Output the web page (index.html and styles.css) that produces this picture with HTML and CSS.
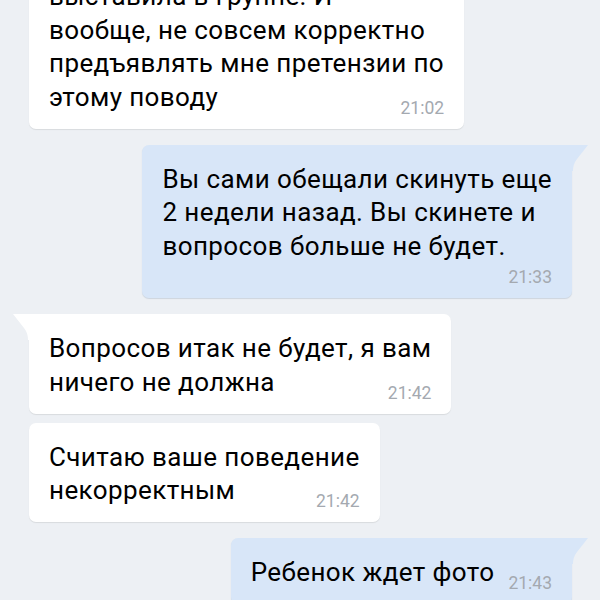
FILE: index.html
```html
<!DOCTYPE html>
<html lang="ru">
<head>
  <meta charset="UTF-8" />
  <meta name="viewport" content="width=device-width, initial-scale=1.0" />
  <title>Диалог</title>
  <link rel="stylesheet" href="styles.css">
</head>
<body>
  <main class="chat">
    <div class="msg in">
      <p>выставила в группе. И<br>вообще, не совсем корректно<br>предъявлять мне претензии по<br>этому поводу<span class="time">21:02</span></p>
    </div>

    <div class="msg out first">
      <svg class="tail" width="17" height="26" viewBox="0 0 17 26"><path d="M0 0 H16 L5 14 Q1 19 1 26 H0 Z" /></svg>
      <p>Вы сами обещали скинуть еще<br>2 недели назад. Вы скинете и<br>вопросов больше не будет.</p>
      <span class="time own-line">21:33</span>
    </div>

    <div class="msg in first">
      <svg class="tail" width="17" height="26" viewBox="0 0 17 26"><path d="M17 0 H1 L12 14 Q16 19 16 26 H17 Z" /></svg>
      <p>Вопросов итак не будет, я вам<br>ничего не должна<span class="time">21:42</span></p>
    </div>

    <div class="msg in next">
      <p>Считаю ваше поведение<br>некорректным<span class="time">21:42</span></p>
    </div>

    <div class="msg out first">
      <svg class="tail" width="17" height="26" viewBox="0 0 17 26"><path d="M0 0 H16 L5 14 Q1 19 1 26 H0 Z" /></svg>
      <p>Ребенок ждет фото<span class="time">21:43</span></p>
    </div>
  </main>
</body>
</html>
```

FILE: styles.css
```css
body {
  margin: 0;
  background: #edf0f4;
  font-family: Roboto, 'Noto Sans', sans-serif;
  color: #000;
  overflow: hidden;
}
.chat {
  display: flex;
  flex-direction: column;
  margin-top: -38px;
  padding: 0 28px 0 29px;
}
.msg {
  position: relative;
  display: flow-root;
  padding: 18px 20px 11px;
  border-radius: 7px;
  font-size: 26px;
  line-height: 33.5px;
  letter-spacing: 0.4px;
}
.msg p {
  margin: 0;
}
.msg.in {
  align-self: flex-start;
  background: #fff;
  box-shadow: 0 1px 1px rgba(0,0,0,0.09);
}
.msg.out {
  align-self: flex-end;
  background: #d8e6f8;
  box-shadow: 0 1px 1px rgba(60,90,130,0.18);
}
.msg.first {
  margin-top: 16px;
}
.msg.next {
  margin-top: 9px;
}
.msg.first.in {
  border-top-left-radius: 0;
}
.msg.first.out {
  border-top-right-radius: 0;
}
.tail {
  position: absolute;
  top: 0;
}
.msg.out .tail {
  left: 100%;
  fill: #d8e6f8;
}
.msg.in .tail {
  right: 100%;
  fill: #fff;
}
.time {
  float: right;
  margin: 17px 0 0 14px;
  font-size: 17.5px;
  line-height: 20px;
  letter-spacing: 0;
  color: #a4a9b0;
}
.time.own-line {
  float: none;
  display: block;
  margin: 4px 0 0;
  text-align: right;
}
```
